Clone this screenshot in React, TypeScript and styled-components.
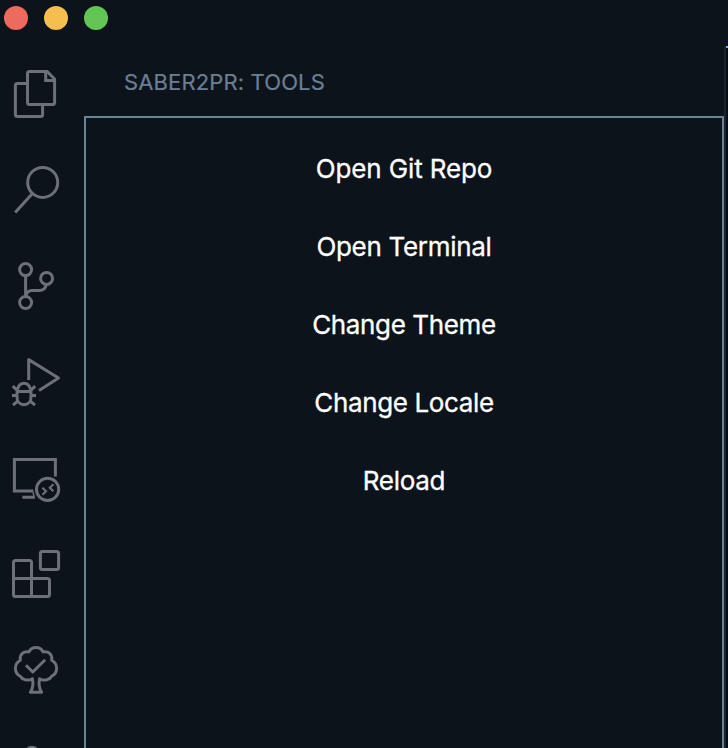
import React from "react";
import styled, { createGlobalStyle } from "styled-components";

const GlobalStyle = createGlobalStyle`
  * { box-sizing: border-box; }
  body { margin: 0; background: #0d131b; overflow: hidden; }
`;

const Window = styled.div`
  display: flex;
  flex-direction: column;
  width: 728px;
  height: 748px;
  overflow: hidden;
  background: #0d131b;
  font-family: Inter, "Liberation Sans", sans-serif;
`;

const TitleBar = styled.header`
  display: flex;
  flex: 0 0 46px;
  gap: 16px;
  padding: 6px 4px;
`;

const WindowButton = styled.span<{ $color: string }>`
  width: 24px;
  height: 24px;
  border-radius: 50%;
  background: ${(p) => p.$color};
`;

const Workbench = styled.div`
  display: flex;
  flex: 1;
  min-height: 0;
`;

const ActivityBar = styled.nav`
  display: flex;
  flex-direction: column;
  flex: 0 0 84px;
  overflow: hidden;
`;

const ActivityIcon = styled.svg`
  display: block;
  flex: 0 0 96px;
  width: 84px;
  height: 96px;
  fill: none;
  stroke: #6c7077;
  stroke-width: 3;
  stroke-linejoin: round;
`;

const SideBar = styled.aside`
  display: flex;
  flex-direction: column;
  flex: 0 0 640px;
`;

const SideBarTitle = styled.h2`
  flex: 0 0 70px;
  margin: 0;
  padding: 3px 0 0 40px;
  font-size: 22px;
  font-weight: 400;
  line-height: 67px;
  letter-spacing: 0.13px;
  color: #6a7f93;
  -webkit-text-stroke: 0.2px #6a7f93;
  white-space: nowrap;
`;

const ToolList = styled.div`
  display: flex;
  flex: 1;
  flex-direction: column;
  align-items: stretch;
  padding-top: 12px;
  border: 2px solid #6c8296;
  border-bottom: 0;
`;

const ToolButton = styled.button<{ $spacing: number }>`
  height: 78px;
  padding: 0;
  border: 0;
  background: none;
  color: #fff;
  font: 400 26px/78px Inter, "Liberation Sans", sans-serif;
  letter-spacing: ${(p) => p.$spacing}px;
  -webkit-text-stroke: 0.3px #fff;
`;

const EditorEdge = styled.div`
  flex: 1;
  border-left: 2px solid #1a2333;
  background: #090d13;
`;

const ActiveTabLine = styled.div`
  height: 2px;
  background: #79a8f5;
`;

const tools = [
  { label: "Open Git Repo", spacing: -0.13 },
  { label: "Open Terminal", spacing: -0.3 },
  { label: "Change Theme", spacing: -0.37 },
  { label: "Change Locale", spacing: -0.37 },
  { label: "Reload", spacing: -0.3 },
];

const Icon = ({ label, children }: { label: string; children: React.ReactNode }) => (
  <ActivityIcon viewBox="0 0 84 96" role="img" aria-label={label}>
    {children}
  </ActivityIcon>
);

export default function App() {
  return (
    <>
      <GlobalStyle />
      <Window>
        <TitleBar>
          <WindowButton $color="#ed6a5f" />
          <WindowButton $color="#f5bf4f" />
          <WindowButton $color="#62c655" />
        </TitleBar>
        <Workbench>
          <ActivityBar>
            <Icon label="Explorer">
              <path d="M29.5 25.4H47L54.6 33V56.6a2 2 0 0 1-2 2H29.5a2 2 0 0 1-2-2V27.4a2 2 0 0 1 2-2Z" />
              <path d="M45.7 25.4V34.4H54.6" strokeLinejoin="miter" />
              <path d="M27.5 37.4H17.4a2 2 0 0 0-2 2V68.6a2 2 0 0 0 2 2H40.6a2 2 0 0 0 2-2V58.6" />
            </Icon>
            <Icon label="Search">
              <circle cx="42.7" cy="40.4" r="15" />
              <path d="M32.4 51.4L15.2 70.6" />
            </Icon>
            <Icon label="Source Control">
              <circle cx="25.6" cy="31.6" r="6" />
              <circle cx="46.6" cy="40.4" r="6" />
              <circle cx="25.6" cy="64.5" r="6" />
              <path d="M25.6 37.6V58.5C26.3 55 28.3 52.4 32 52.4H39.2C43 52.4 45.7 50 46.3 46.4" />
            </Icon>
            <Icon label="Run and Debug">
              <path d="M28.7 46V25.6L58.5 44L39 56.6" />
              <path d="M24 49.3C20 49.3 17 53 17 58.5V63C17 67.6 20 70.7 24 70.7S31 67.6 31 63V58.5C31 53 28 49.3 24 49.3ZM17 57.6H31" />
              <path d="M12.8 52.2L17 56.2M35.2 52.2L31 56.2M12 61.5H17M36 61.5H31M13 71.2L17.8 67M35 71.2L30.2 67" />
            </Icon>
            <Icon label="Remote Explorer">
              <path d="M55.4 46.4V29.5H14.4V61H32.4M22.4 67.2H34.5" strokeLinejoin="miter" />
              <path d="M32.4 59.5L34.5 68.5" strokeWidth="1.4" />
              <circle cx="47.6" cy="59.4" r="11.1" />
              <path d="M42.4 57.8L46 61.3L42.4 64.8M53.4 54.2L49.8 57.7L53.4 61.2" strokeWidth="2.2" strokeLinejoin="miter" />
            </Icon>
            <Icon label="Extensions">
              <path d="M15.5 34.4H29.5a2 2 0 0 1 2 2V52.6H47.5a2 2 0 0 1 2 2V68.5a2 2 0 0 1-2 2H15.5a2 2 0 0 1-2-2V36.4a2 2 0 0 1 2-2ZM13.5 52.6H31.5V70.5" />
              <rect x="40.4" y="25.5" width="18.2" height="18" rx="2" />
            </Icon>
            <Icon label="Tests">
              <path d="M36 25.6C32.8 25.6 30.4 27.2 29 29.9C23.6 28.8 19.4 32.4 20.3 38.2C13.8 41.8 13.8 51 20 54C22.4 58 28 59.4 32.4 56.7C33.5 62 32.8 66.5 30.4 70.3H41.6C39.2 66.5 38.5 62 39.6 56.7C44 59.4 49.6 58 52 54C58.2 51 58.2 41.8 51.7 38.2C52.6 32.4 48.4 28.8 43 29.9C41.6 27.2 39.2 25.6 36 25.6Z" />
              <path d="M26 43.3L32.8 50L45.2 37.8" />
            </Icon>
            <Icon label="Source History">
              <circle cx="32" cy="35.8" r="6.5" />
            </Icon>
          </ActivityBar>
          <SideBar>
            <SideBarTitle>SABER2PR: TOOLS</SideBarTitle>
            <ToolList>
              {tools.map((tool) => (
                <ToolButton key={tool.label} $spacing={tool.spacing}>
                  {tool.label}
                </ToolButton>
              ))}
            </ToolList>
          </SideBar>
          <EditorEdge>
            <ActiveTabLine />
          </EditorEdge>
        </Workbench>
      </Window>
    </>
  );
}
